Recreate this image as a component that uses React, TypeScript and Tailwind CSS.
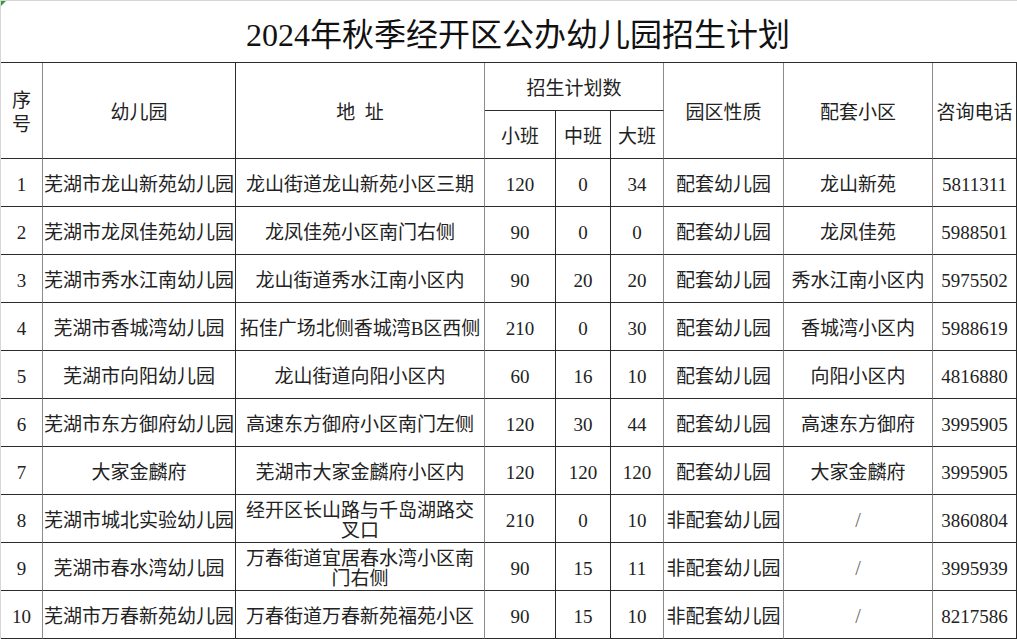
import React from 'react';

const rows = [
  { no: '1', name: '芜湖市龙山新苑幼儿园', addr: ['龙山街道龙山新苑小区三期'], s: '120', m: '0', l: '34', kind: '配套幼儿园', area: '龙山新苑', tel: '5811311' },
  { no: '2', name: '芜湖市龙凤佳苑幼儿园', addr: ['龙凤佳苑小区南门右侧'], s: '90', m: '0', l: '0', kind: '配套幼儿园', area: '龙凤佳苑', tel: '5988501' },
  { no: '3', name: '芜湖市秀水江南幼儿园', addr: ['龙山街道秀水江南小区内'], s: '90', m: '20', l: '20', kind: '配套幼儿园', area: '秀水江南小区内', tel: '5975502' },
  { no: '4', name: '芜湖市香城湾幼儿园', addr: ['拓佳广场北侧香城湾B区西侧'], s: '210', m: '0', l: '30', kind: '配套幼儿园', area: '香城湾小区内', tel: '5988619' },
  { no: '5', name: '芜湖市向阳幼儿园', addr: ['龙山街道向阳小区内'], s: '60', m: '16', l: '10', kind: '配套幼儿园', area: '向阳小区内', tel: '4816880' },
  { no: '6', name: '芜湖市东方御府幼儿园', addr: ['高速东方御府小区南门左侧'], s: '120', m: '30', l: '44', kind: '配套幼儿园', area: '高速东方御府', tel: '3995905' },
  { no: '7', name: '大家金麟府', addr: ['芜湖市大家金麟府小区内'], s: '120', m: '120', l: '120', kind: '配套幼儿园', area: '大家金麟府', tel: '3995905' },
  { no: '8', name: '芜湖市城北实验幼儿园', addr: ['经开区长山路与千岛湖路交', '叉口'], s: '210', m: '0', l: '10', kind: '非配套幼儿园', area: '/', tel: '3860804' },
  { no: '9', name: '芜湖市春水湾幼儿园', addr: ['万春街道宜居春水湾小区南', '门右侧'], s: '90', m: '15', l: '11', kind: '非配套幼儿园', area: '/', tel: '3995939' },
  { no: '10', name: '芜湖市万春新苑幼儿园', addr: ['万春街道万春新苑福苑小区'], s: '90', m: '15', l: '10', kind: '非配套幼儿园', area: '/', tel: '8217586' },
];

// cell: right + bottom border, centred text
const cell = 'flex items-center justify-center text-center pt-[4px] border-r border-b border-[#2b2b2b] whitespace-nowrap';
const grayR = 'border-r-[#8c8c8c]';

export default function App() {
  return (
    <div
      className="relative w-[1017px] h-[639px] overflow-hidden bg-white text-[#222] border-t border-l border-[#d6d6d6]"
      style={{ fontFamily: '"Liberation Serif", "Noto Sans CJK SC", serif' }}
    >
      <div className="absolute left-0 top-0 w-0 h-0 border-t-[5px] border-r-[5px] border-t-[#3c9a3c] border-r-transparent" />

      <div className="h-[62px] flex items-center justify-center pl-[18px] pt-[6px] text-[32px] text-[#111] border-b border-[#2b2b2b]">
        2024年秋季经开区公办幼儿园招生计划
      </div>

      <div className="grid grid-cols-[42px_193px_249px_71px_55px_53px_120px_149px_84px] auto-rows-[48px] text-[19px] leading-[21px]">
        <div className={`${cell} ${grayR} row-span-2 flex-col leading-[24px]`}>
          <span>序</span>
          <span>号</span>
        </div>
        <div className={`${cell} row-span-2`}>幼儿园</div>
        <div className={`${cell} ${grayR} row-span-2`}>地&nbsp;&nbsp;址</div>
        <div className={`${cell} col-span-3 ${grayR}`}>招生计划数</div>
        <div className={`${cell} ${grayR} row-span-2`}>园区性质</div>
        <div className={`${cell} ${grayR} row-span-2`}>配套小区</div>
        <div className={`${cell} row-span-2`}>咨询电话</div>
        <div className={cell}>小班</div>
        <div className={cell}>中班</div>
        <div className={`${cell} ${grayR}`}>大班</div>

        {rows.map((r) => (
          <React.Fragment key={r.no}>
            <div className={`${cell} ${grayR}`}>{r.no}</div>
            <div className={cell}>{r.name}</div>
            <div className={`${cell} ${grayR} flex-col leading-[20px]`}>
              {r.addr.map((a) => (
                <span key={a}>{a}</span>
              ))}
            </div>
            <div className={cell}>{r.s}</div>
            <div className={cell}>{r.m}</div>
            <div className={`${cell} ${grayR}`}>{r.l}</div>
            <div className={`${cell} ${grayR}`}>{r.kind}</div>
            <div className={`${cell} ${grayR}`}>
              {r.area === '/' ? <span className="text-[#666] text-[20px]">/</span> : r.area}
            </div>
            <div className={cell}>{r.tel}</div>
          </React.Fragment>
        ))}
      </div>
    </div>
  );
}
